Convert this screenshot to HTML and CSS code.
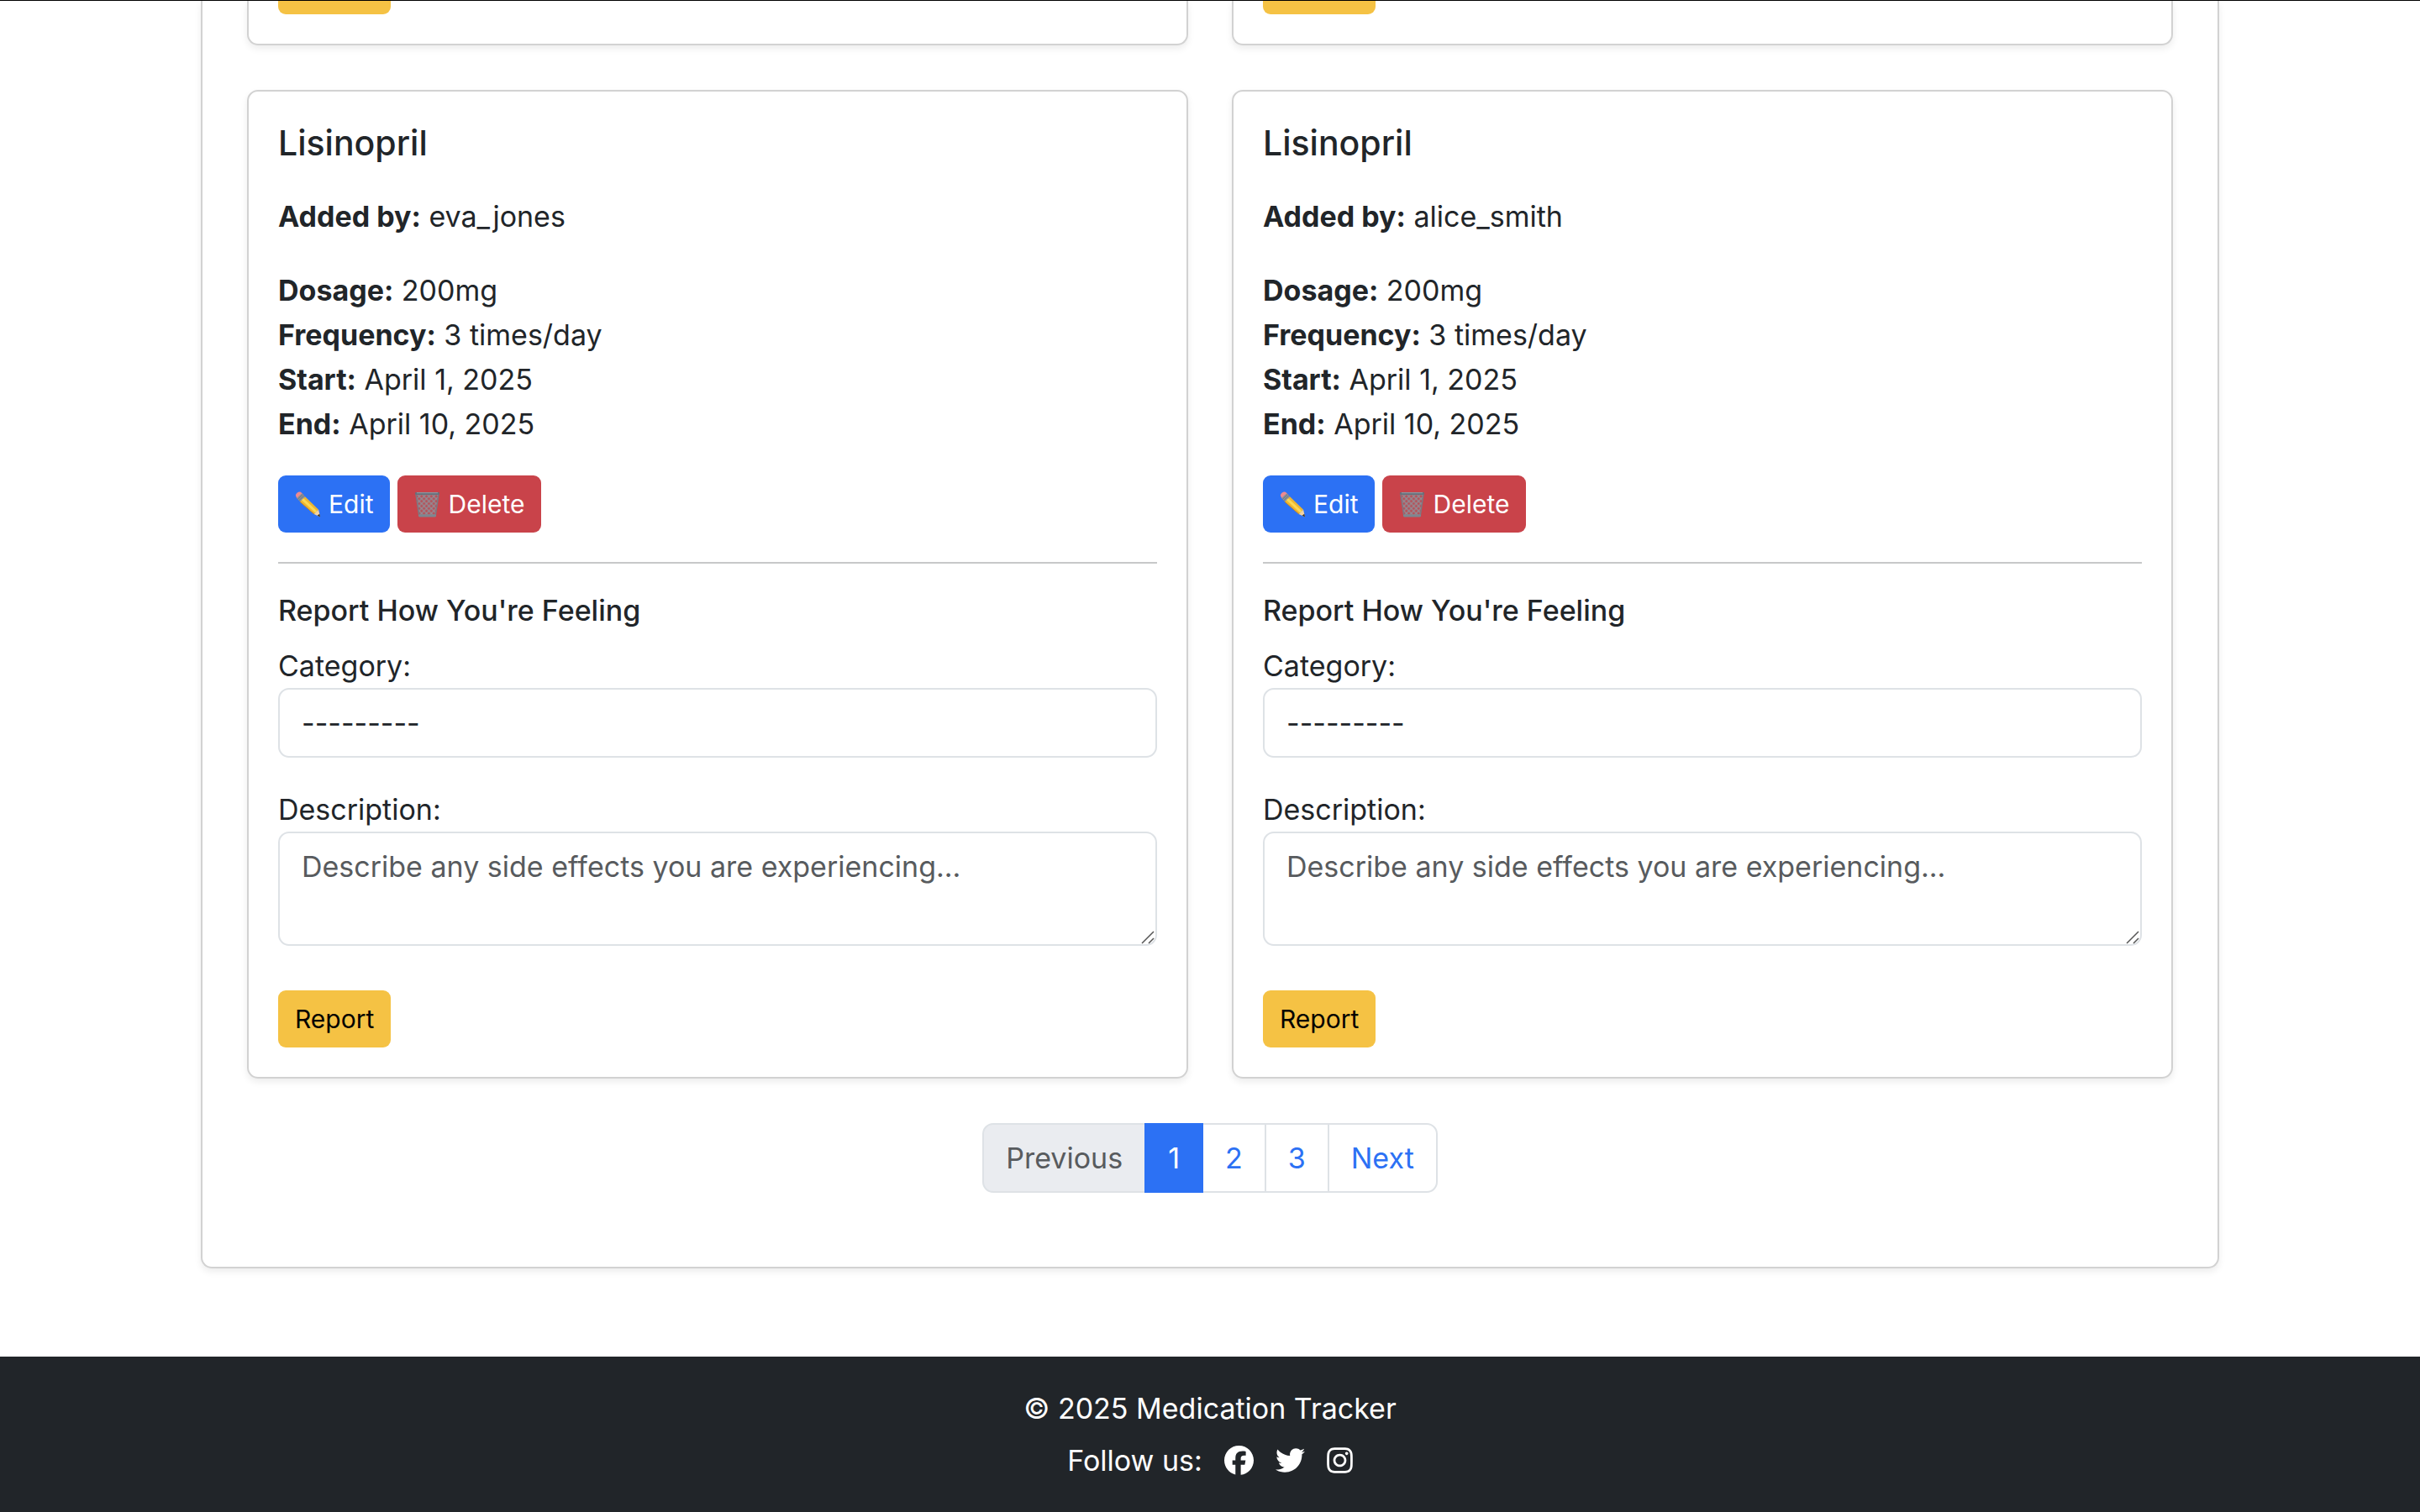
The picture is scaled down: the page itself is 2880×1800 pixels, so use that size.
FILE: index.html
```html
<!DOCTYPE html>
<html lang="en">
<head>
<meta charset="utf-8">
<title>Medication Tracker</title>
<link rel="stylesheet" href="styles.css">
</head>
<body>
<svg class="sprite" aria-hidden="true">
  <defs>
    <pattern id="mesh" width="6" height="6" patternUnits="userSpaceOnUse">
      <path d="M0 0l6 6M6 0L0 6" stroke="#918f97" stroke-width="1.300"/>
    </pattern>
    <symbol id="pencil" viewBox="0 0 32 32">
      <path d="M3 1.500Q6 -.5 8.500 2L11 4.800 4.800 10.500 2 7.500Q-.5 4 3 1.500z" fill="#ee8a90"/>
      <path d="M8.500 2.300l4 4.200-6.300 6.200-4-4.500z" fill="#8d939b"/>
      <path d="M9.700 3.500l-6.300 6.200M11.200 5l-6.300 6.200" stroke="#5d636b" stroke-width=".7"/>
      <path d="M12.500 6.500L29 22.500l-5.500 5.300L6.200 12.700z" fill="#eeb631"/>
      <path d="M10.500 8.500L27.300 24.200l-2.200 2L8.200 10.700z" fill="#fbd855"/>
      <path d="M29 22.500L31 31.500l-7.500-3.700z" fill="#f3d3a1"/>
      <path d="M31 31.500l-.8-3.800-2.700 2z" fill="#33302d"/>
      <path d="M6.200 12.700l17.300 15.100" stroke="#c9871d" stroke-width="1"/>
    </symbol>
    <symbol id="trash" viewBox="0 0 32 32">
      <path d="M2 3l4 27h20l4-27z" fill="#8a6a74" fill-opacity=".3"/>
      <path d="M2 3l4 27h20l4-27z" fill="url(#mesh)"/>
      <path d="M2 3l4 27M30 3l-4 27" stroke="#7c7881" stroke-width="1.500"/>
      <rect x="1" y="1" width="30" height="3" rx="1.500" fill="#66707a"/>
      <path d="M3 1.800h26" stroke="#a3adb6" stroke-width=".8"/>
      <rect x="5" y="28.500" width="22" height="3" rx="1.500" fill="#7d8790"/>
    </symbol>
    <symbol id="grip" viewBox="0 0 16 16">
      <path d="M1 15L15 1M9 15l6-6" stroke="#555" stroke-width="1.500" fill="none"/>
    </symbol>
  </defs>
</svg>

<main class="container">
  <section class="panel">
    <div class="grid">
      <article class="card card-tail"><div class="tail"><button class="btn btn-warning btn-tail" type="button" aria-label="Report"></button></div></article>
      <article class="card card-tail"><div class="tail"><button class="btn btn-warning btn-tail" type="button" aria-label="Report"></button></div></article>

      <article class="card">
        <h2 class="card-title">Lisinopril</h2>
        <p class="text"><strong>Added by:</strong> eva_jones</p>
        <p class="text"><strong>Dosage:</strong> 200mg<br><strong>Frequency:</strong> 3 times/day<br><strong>Start:</strong> April 1, 2025<br><strong>End:</strong> April 10, 2025</p>
        <div class="actions">
          <button class="btn btn-primary" type="button"><svg class="emoji"><use href="#pencil"/></svg>Edit</button>
          <button class="btn btn-danger" type="button"><svg class="emoji"><use href="#trash"/></svg>Delete</button>
        </div>
        <hr class="rule">
        <form class="report">
          <h3 class="report-title">Report How You're Feeling</h3>
          <div class="field">
            <label for="category-1">Category:</label>
            <select class="control" id="category-1"><option>---------</option></select>
          </div>
          <div class="field">
            <label for="description-1">Description:</label>
            <div class="area">
              <textarea class="control textarea" id="description-1" placeholder="Describe any side effects you are experiencing..."></textarea>
              <svg class="grip"><use href="#grip"/></svg>
            </div>
          </div>
          <button class="btn btn-warning btn-report" type="button">Report</button>
        </form>
      </article>

      <article class="card">
        <h2 class="card-title">Lisinopril</h2>
        <p class="text"><strong>Added by:</strong> alice_smith</p>
        <p class="text"><strong>Dosage:</strong> 200mg<br><strong>Frequency:</strong> 3 times/day<br><strong>Start:</strong> April 1, 2025<br><strong>End:</strong> April 10, 2025</p>
        <div class="actions">
          <button class="btn btn-primary" type="button"><svg class="emoji"><use href="#pencil"/></svg>Edit</button>
          <button class="btn btn-danger" type="button"><svg class="emoji"><use href="#trash"/></svg>Delete</button>
        </div>
        <hr class="rule">
        <form class="report">
          <h3 class="report-title">Report How You're Feeling</h3>
          <div class="field">
            <label for="category-2">Category:</label>
            <select class="control" id="category-2"><option>---------</option></select>
          </div>
          <div class="field">
            <label for="description-2">Description:</label>
            <div class="area">
              <textarea class="control textarea" id="description-2" placeholder="Describe any side effects you are experiencing..."></textarea>
              <svg class="grip"><use href="#grip"/></svg>
            </div>
          </div>
          <button class="btn btn-warning btn-report" type="button">Report</button>
        </form>
      </article>
    </div>

    <nav aria-label="Pages">
      <ul class="pagination">
        <li><span class="page disabled">Previous</span></li>
        <li><a class="page active" href="#1" aria-current="page">1</a></li>
        <li><a class="page" href="#2">2</a></li>
        <li><a class="page" href="#3">3</a></li>
        <li><a class="page" href="#2">Next</a></li>
      </ul>
    </nav>
  </section>
</main>

<footer class="footer">
  <p>© 2025 Medication Tracker</p>
  <p class="follow">
    <span>Follow us:</span>
    <a href="#facebook" aria-label="Facebook"><svg class="social" viewBox="0 0 512 512"><path d="M512 256C512 114.600 397.400 0 256 0S0 114.600 0 256C0 376 82.700 476.800 194.200 504.500V334.200H141.400V256h52.800V222.300c0-87.100 39.400-127.500 125-127.500c16.200 0 44.200 3.200 55.700 6.400V172c-6-.6-16.500-1-29.600-1c-42 0-58.200 15.900-58.200 57.200V256h83.600l-14.400 78.200H287V510.100C413.800 494.800 512 386.900 512 256z"/></svg></a>
    <a href="#twitter" aria-label="Twitter"><svg class="social" viewBox="0 0 512 512"><path d="M459.370 151.716c.325 4.548.325 9.097.325 13.645 0 138.720-105.583 298.558-298.558 298.558-59.452 0-114.680-17.219-161.137-47.106 8.447.974 16.568 1.299 25.340 1.299 49.055 0 94.213-16.568 130.274-44.832-46.132-.975-84.792-31.188-98.112-72.772 6.498.974 12.995 1.624 19.818 1.624 9.421 0 18.843-1.300 27.614-3.573-48.081-9.747-84.143-51.980-84.143-102.985v-1.299c13.969 7.797 30.214 12.670 47.431 13.319-28.264-18.843-46.781-51.005-46.781-87.391 0-19.492 5.197-37.360 14.294-52.954 51.655 63.675 129.300 105.258 216.365 109.807-1.624-7.797-2.599-15.918-2.599-24.040 0-57.828 46.782-104.934 104.934-104.934 30.213 0 57.502 12.670 76.670 33.137 23.715-4.548 46.456-13.320 66.599-25.340-7.798 24.366-24.366 44.833-46.132 57.827 21.117-2.273 41.584-8.122 60.426-16.243-14.292 20.791-32.161 39.308-52.628 54.253z"/></svg></a>
    <a href="#instagram" aria-label="Instagram"><svg class="social social-narrow" viewBox="0 0 448 512"><path d="M224.100 141c-63.600 0-114.900 51.300-114.900 114.900s51.300 114.900 114.900 114.900S339 319.500 339 255.900 287.700 141 224.100 141zm0 189.600c-41.100 0-74.700-33.500-74.700-74.700s33.500-74.700 74.700-74.700 74.700 33.500 74.700 74.700-33.600 74.700-74.700 74.700zm146.400-194.300c0 14.900-12 26.800-26.800 26.800-14.900 0-26.800-12-26.800-26.800s12-26.800 26.800-26.800 26.800 12 26.800 26.800zm76.100 27.200c-1.700-35.900-9.900-67.700-36.200-93.900-26.200-26.200-58-34.400-93.900-36.200-37-2.100-147.900-2.100-184.900 0-35.800 1.700-67.600 9.900-93.900 36.100s-34.400 58-36.200 93.900c-2.100 37-2.100 147.900 0 184.900 1.700 35.900 9.900 67.700 36.200 93.900s58 34.400 93.900 36.200c37 2.100 147.900 2.100 184.900 0 35.900-1.700 67.700-9.900 93.900-36.200 26.200-26.200 34.400-58 36.200-93.900 2.100-37 2.100-147.800 0-184.800zM398.800 388c-7.800 19.600-22.900 34.700-42.600 42.600-29.500 11.700-99.500 9-132.100 9s-102.700 2.600-132.100-9c-19.600-7.800-34.700-22.900-42.600-42.600-11.700-29.500-9-99.500-9-132.100s-2.600-102.700 9-132.100c7.800-19.600 22.900-34.700 42.600-42.600 29.500-11.700 99.500-9 132.100-9s102.700-2.600 132.100 9c19.600 7.800 34.700 22.900 42.600 42.600 11.700 29.500 9 99.500 9 132.100s2.700 102.700-9 132.100z"/></svg></a>
  </p>
</footer>
</body>
</html>
```
FILE: styles.css
```css
* { box-sizing: border-box; }

body {
  margin: 0;
  border-top: 1px solid #000;
  background: #fff;
  color: #212529;
  font: 400 34px/53px Inter, "Liberation Sans", sans-serif;
}

h2, h3, p, ul { margin: 0; }
strong { font-weight: 700; }
.sprite { display: block; width: 0; height: 0; }

.container {
  max-width: 2508px;
  margin: 0 auto;
  padding: 0 53px;
}

.panel {
  padding: 0 53px 88px;
  border: 2px solid #d2d2d2;
  border-top: 0;
  border-radius: 0 0 13px 13px;
  box-shadow: 0 4px 9px rgba(0, 0, 0, .075);
}

.grid {
  display: grid;
  grid-template-columns: 1fr 1fr;
  gap: 53px 52px;
}

.card {
  padding: 35px;
  border: 2px solid #d2d2d2;
  border-radius: 13px;
  box-shadow: 0 4px 9px rgba(0, 0, 0, .075);
}

/* Cards of the row that is scrolled past the top edge */
.card-tail {
  padding-top: 0;
  border-top: 0;
  border-radius: 0 0 13px 13px;
}
.tail {
  display: flex;
  align-items: flex-end;
  height: 16px;
  overflow: hidden;
}
.btn-tail { width: 134px; flex: none; }

.card-title {
  margin-bottom: 35px;
  font-size: 41px;
  line-height: 52px;
  font-weight: 500;
}
.text { margin-bottom: 35px; }

.actions { display: flex; gap: 9px; }

.btn {
  display: flex;
  align-items: center;
  gap: 9px;
  height: 68px;
  padding: 0 20px;
  border: 0;
  border-radius: 9px;
  font: 400 30px/46px Inter, "Liberation Sans", sans-serif;
}
.btn-primary { background: #2c71f4; color: #fff; }
.btn-danger { background: #c9434a; color: #fff; }
.btn-warning { background: #f5c244; color: #000; }
.emoji { width: 31px; height: 31px; }

.rule {
  height: 2px;
  margin: 35px 0;
  border: 0;
  background: #c7c8c9;
}

.report-title {
  margin-bottom: 18px;
  font-size: 34px;
  line-height: 42px;
  font-weight: 500;
}
.field { margin-bottom: 35px; }
.field label { display: block; }

.control {
  display: block;
  width: 100%;
  height: 83px;
  padding: 13px 26px;
  border: 2px solid #dee2e6;
  border-radius: 13px;
  background: #fff;
  color: #212529;
  font: inherit;
  appearance: none;
}
.area { position: relative; }
.textarea { height: 136px; resize: none; overflow: hidden; }
.textarea::placeholder { color: #585b5e; opacity: 1; }
.grip {
  position: absolute;
  right: 3px;
  bottom: 2px;
  width: 16px;
  height: 16px;
}
.btn-report { margin-top: 53px; }

.pagination {
  display: flex;
  justify-content: center;
  margin-top: 53px;
  padding: 0;
  list-style: none;
}
.pagination li + li { margin-left: -2px; }
.page {
  display: block;
  padding: 13px 26px;
  border: 2px solid #dee2e6;
  color: #2c71f4;
  text-decoration: none;
}
.pagination li:first-child .page { border-radius: 13px 0 0 13px; }
.pagination li:last-child .page { border-radius: 0 13px 13px 0; }
.pagination .disabled { background: #eaecf0; color: #585b5e; }
.active {
  position: relative;
  border-color: #2c71f4;
  background: #2c71f4;
  color: #fff;
}

.footer {
  display: flex;
  flex-direction: column;
  align-items: center;
  gap: 9px;
  margin-top: 105px;
  padding: 35px;
  background: #212529;
  color: #fff;
}
.follow {
  display: flex;
  align-items: center;
  gap: 26px;
}
.follow a { display: flex; }
.social { width: 35px; height: 35px; fill: #fff; }
.social-narrow { width: 31px; }
```
